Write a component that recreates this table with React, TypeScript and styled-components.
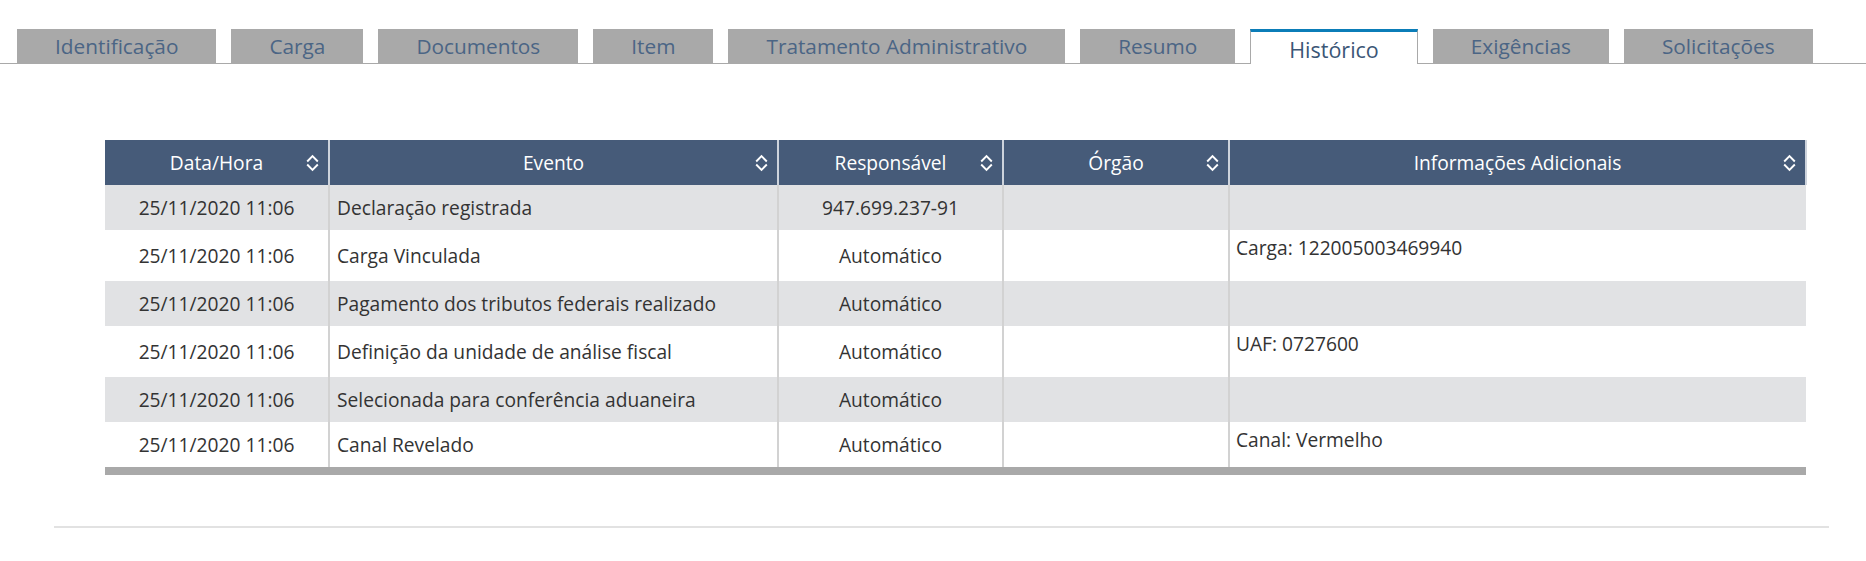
import React from 'react';
import styled, { createGlobalStyle } from 'styled-components';

const GlobalStyle = createGlobalStyle`
  body {
    margin: 0;
    background: #ffffff;
    font-family: "Open Sans", "Liberation Sans", sans-serif;
  }
`;

const tabs = [
  'Identificação',
  'Carga',
  'Documentos',
  'Item',
  'Tratamento Administrativo',
  'Resumo',
  'Histórico',
  'Exigências',
  'Solicitações',
];

interface Evento {
  dataHora: string;
  evento: string;
  responsavel: string;
  orgao: string;
  info: string;
}

const eventos: Evento[] = [
  { dataHora: '25/11/2020 11:06', evento: 'Declaração registrada', responsavel: '947.699.237-91', orgao: '', info: '' },
  { dataHora: '25/11/2020 11:06', evento: 'Carga Vinculada', responsavel: 'Automático', orgao: '', info: 'Carga: 122005003469940' },
  { dataHora: '25/11/2020 11:06', evento: 'Pagamento dos tributos federais realizado', responsavel: 'Automático', orgao: '', info: '' },
  { dataHora: '25/11/2020 11:06', evento: 'Definição da unidade de análise fiscal', responsavel: 'Automático', orgao: '', info: 'UAF: 0727600' },
  { dataHora: '25/11/2020 11:06', evento: 'Selecionada para conferência aduaneira', responsavel: 'Automático', orgao: '', info: '' },
  { dataHora: '25/11/2020 11:06', evento: 'Canal Revelado', responsavel: 'Automático', orgao: '', info: 'Canal: Vermelho' },
];

const columns = [
  { label: 'Data/Hora', width: 224 },
  { label: 'Evento', width: 449 },
  { label: 'Responsável', width: 225 },
  { label: 'Órgão', width: 226 },
  { label: 'Informações Adicionais', width: 577 },
];

function SortIcon() {
  return (
    <SortSvg width="13" height="18" viewBox="0 0 13 18">
      <path d="M1.2 7.5 L6.5 2.2 L11.8 7.5" fill="none" stroke="#ffffff" strokeWidth="1.9" />
      <path d="M1.2 10.5 L6.5 15.8 L11.8 10.5" fill="none" stroke="#ffffff" strokeWidth="1.9" />
    </SortSvg>
  );
}

export default function App() {
  return (
    <Page>
      <GlobalStyle />
      <TabBar>
        {tabs.map((tab) => (
          <Tab key={tab} active={tab === 'Histórico'}>
            {tab}
          </Tab>
        ))}
      </TabBar>

      <Content>
        <Table>
          <colgroup>
            {columns.map((col) => (
              <col key={col.label} style={{ width: col.width }} />
            ))}
          </colgroup>
          <thead>
            <tr>
              {columns.map((col) => (
                <HeadCell key={col.label}>
                  {col.label}
                  <SortIcon />
                </HeadCell>
              ))}
            </tr>
          </thead>
          <tbody>
            {eventos.map((ev, i) => (
              <Row key={i} striped={i % 2 === 0}>
                <Cell align="center">{ev.dataHora}</Cell>
                <Cell>{ev.evento}</Cell>
                <Cell align="center">{ev.responsavel}</Cell>
                <Cell>{ev.orgao}</Cell>
                <InfoCell filled={ev.info !== ''}>{ev.info}</InfoCell>
              </Row>
            ))}
          </tbody>
        </Table>
        <TableFooter />
      </Content>

      <Divider />
    </Page>
  );
}

const Page = styled.div`
  width: 1866px;
  padding-top: 29px;
`;

const TabBar = styled.div`
  display: flex;
  gap: 15px;
  height: 34px;
  padding-left: 17px;
  border-bottom: 1px solid #a9a9a9;
`;

const Tab = styled.div<{ active: boolean }>`
  box-sizing: border-box;
  flex-shrink: 0;
  height: ${({ active }) => (active ? '35px' : '34px')};
  padding: 0 38px;
  display: flex;
  align-items: center;
  justify-content: center;
  font-size: ${({ active }) => (active ? '21.5px' : '20.8px')};
  line-height: 1;
  color: ${({ active }) => (active ? '#3b5676' : '#4b6585')};
  background: ${({ active }) => (active ? '#ffffff' : '#a9a9a9')};
  border-top: ${({ active }) => (active ? '3px solid #0b7db8' : 'none')};
  border-left: ${({ active }) => (active ? '1px solid #a9a9a9' : 'none')};
  border-right: ${({ active }) => (active ? '1px solid #a9a9a9' : 'none')};
  padding-top: ${({ active }) => (active ? '3px' : '1px')};
  white-space: nowrap;
`;

const Content = styled.div`
  padding: 76px 0 0 105px;
  width: 1701px;
`;

const Table = styled.table`
  width: 1701px;
  border-collapse: collapse;
  table-layout: fixed;
  font-size: 19.2px;
  color: #333333;
`;

const HeadCell = styled.th`
  position: relative;
  height: 45px;
  padding: 0 24px;
  background: #465b79;
  color: #ffffff;
  font-weight: 400;
  font-size: 19.2px;
  text-align: center;
  border-right: 2px solid #cdd3dc;
`;

const SortSvg = styled.svg`
  position: absolute;
  right: 9px;
  top: 14px;
`;

const Row = styled.tr<{ striped: boolean }>`
  background: ${({ striped }) => (striped ? '#e1e2e4' : '#ffffff')};

  &:last-child td {
    padding-bottom: 10px;
  }
`;

const Cell = styled.td<{ align?: 'center' | 'left' }>`
  padding: 10px 7px;
  line-height: 25px;
  text-align: ${({ align }) => align || 'left'};
  vertical-align: middle;
  border-right: 2px solid #d2d2d2;
  white-space: nowrap;
`;

const InfoCell = styled.td<{ filled: boolean }>`
  padding: ${({ filled }) => (filled ? '5px 6px 21px' : '10px 6px')};
  line-height: 25px;
  vertical-align: top;
  white-space: nowrap;
`;

const TableFooter = styled.div`
  height: 8px;
  background: #a9a9a9;
`;

const Divider = styled.div`
  margin: 51px 37px 0 54px;
  height: 2px;
  background: #e2e2e2;
`;
